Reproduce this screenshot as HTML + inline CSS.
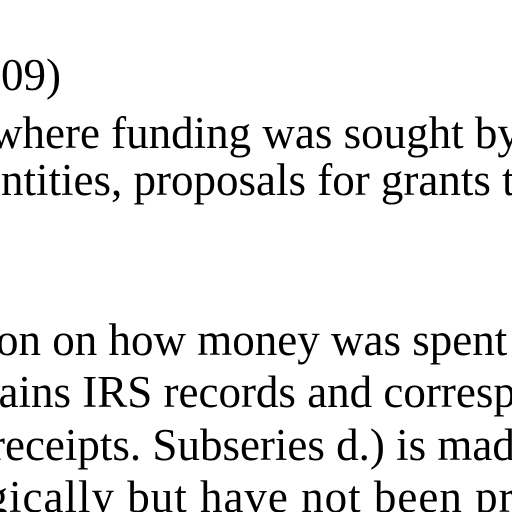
<!DOCTYPE html>
<html><head><style>
html,body{margin:0;padding:0;background:#fff;width:512px;height:512px;overflow:hidden;position:relative}
.l{position:absolute;white-space:nowrap;font-family:"Liberation Serif",serif;font-size:45px;color:#000;line-height:1}
</style></head><body>
<div class="l" style="left:-44px;top:53px">2009)</div>
<div class="l" style="left:-10px;top:111px">where funding was sought by</div>
<div class="l" style="left:-19px;top:158px">entities, proposals for grants t</div>
<div class="l" style="left:-4px;top:318px">on on how money was spent</div>
<div class="l" style="left:-14px;top:370px">tains IRS records and corresp</div>
<div class="l" style="left:-10px;top:423px">receipts. Subseries d.) is mad</div>
<div class="l" style="left:-38px;top:475px;letter-spacing:1px">ogically but have not been pr</div>
</body></html>
